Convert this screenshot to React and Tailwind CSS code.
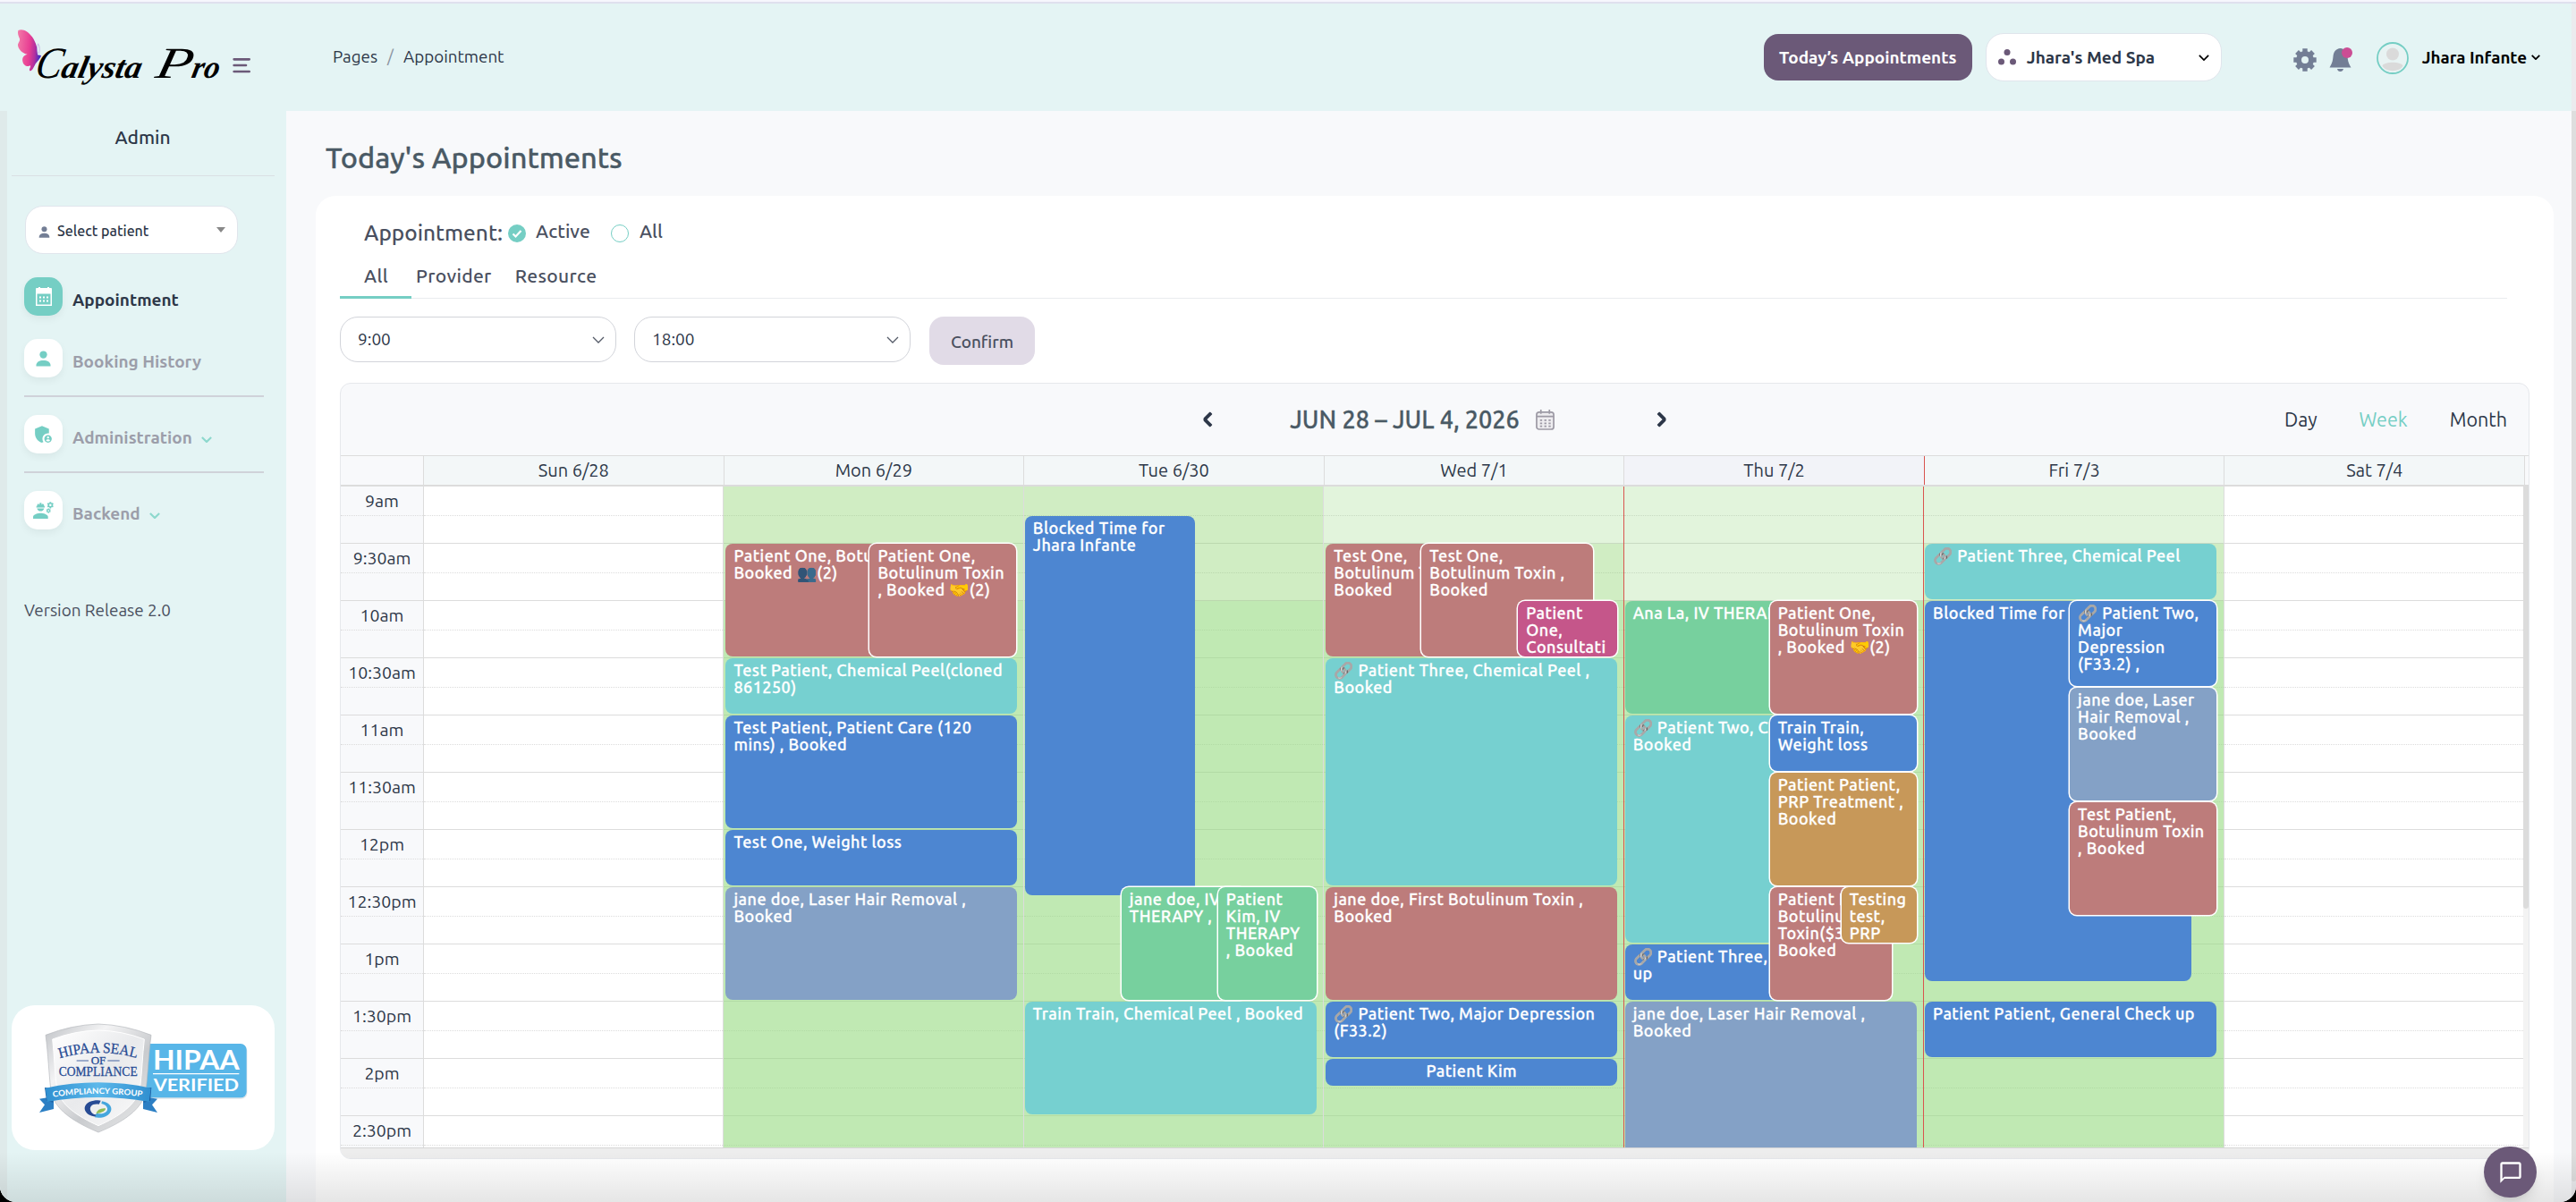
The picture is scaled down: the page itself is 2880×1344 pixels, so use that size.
import {
  MdAdminPanelSettings, MdChatBubbleOutline, MdEngineering,
} from "react-icons/md";

const RED = "bg-[#bd7c7b]";
const TEAL = "bg-[#76d0d0]";
const BLUE = "bg-[#4d86d1]";
const SLATE = "bg-[#84a1c6]";
const GREEN = "bg-[#77d09e]";
const GOLD = "bg-[#c79859]";
const PINK = "bg-[#c5568a]";

// one half-hour row of the time grid
const ROW = 64;

const SHADES = {
  soft: "bg-[#8bd373]/25",
  mid: "bg-[#8ad269]/40",
  full: "bg-[#96da80]/60",
};

const HOURS = [
  "9am", "9:30am", "10am", "10:30am", "11am", "11:30am",
  "12pm", "12:30pm", "1pm", "1:30pm", "2pm", "2:30pm",
];

const EMOJI = {
  "🔗": "grayscale",
  "👥": "brightness-75 saturate-50",
  "🤝": "",
};

// at / len are counted in half-hour rows, x / w in px inside the day column
const DAYS = [
  { name: "Sun 6/28", shades: [], events: [] },
  {
    name: "Mon 6/29",
    shades: [["mid", 0, 2], ["full", 2, 10]],
    events: [
      { at: 1, len: 2, x: 3, w: 200, bg: RED, lines: ["Patient One, Botulinum", "Booked 👥(2)"] },
      { at: 1, len: 2, x: 164, w: 164, bg: RED, inset: true, lines: ["Patient One,", "Botulinum Toxin", ", Booked 🤝(2)"] },
      { at: 3, len: 1, x: 3, w: 326, bg: TEAL, lines: ["Test Patient, Chemical Peel(cloned", "861250)"] },
      { at: 4, len: 2, x: 3, w: 326, bg: BLUE, lines: ["Test Patient, Patient Care (120", "mins) , Booked"] },
      { at: 6, len: 1, x: 3, w: 326, bg: BLUE, lines: ["Test One, Weight loss"] },
      { at: 7, len: 2, x: 3, w: 326, bg: SLATE, lines: ["jane doe, Laser Hair Removal ,", "Booked"] },
    ],
  },
  {
    name: "Tue 6/30",
    shades: [["mid", 0, 2], ["full", 2, 10]],
    events: [
      { at: 0.52, len: 6.65, x: 2, w: 190, bg: BLUE, lines: ["Blocked Time for", "Jhara Infante"] },
      { at: 7, len: 2, x: 110, w: 140, bg: GREEN, inset: true, lines: ["jane doe, IV", "THERAPY ,"] },
      { at: 7, len: 2, x: 218, w: 110, bg: GREEN, inset: true, lines: ["Patient", "Kim, IV", "THERAPY", ", Booked"] },
      { at: 9, len: 2, x: 2, w: 326, bg: TEAL, lines: ["Train Train, Chemical Peel , Booked"] },
    ],
  },
  {
    name: "Wed 7/1",
    shades: [["soft", 0, 1], ["mid", 1, 1], ["full", 2, 10]],
    events: [
      { at: 1, len: 2, x: 3, w: 120, bg: RED, lines: ["Test One,", "Botulinum T", "Booked"] },
      { at: 1, len: 2, x: 110, w: 192, bg: RED, inset: true, lines: ["Test One,", "Botulinum Toxin ,", "Booked"] },
      { at: 2, len: 1, x: 218, w: 111, bg: PINK, inset: true, lines: ["Patient", "One,", "Consultati"] },
      { at: 3, len: 4, x: 3, w: 326, bg: TEAL, lines: ["🔗 Patient Three, Chemical Peel ,", "Booked"] },
      { at: 7, len: 2, x: 3, w: 326, bg: RED, lines: ["jane doe, First Botulinum Toxin ,", "Booked"] },
      { at: 9, len: 1, x: 3, w: 326, bg: BLUE, lines: ["🔗 Patient Two, Major Depression", "(F33.2)"] },
      { at: 10, len: 0.5, x: 3, w: 326, bg: BLUE, center: true, lines: ["Patient Kim"] },
    ],
  },
  {
    name: "Thu 7/2",
    today: true,
    shades: [["soft", 0, 2], ["full", 2, 10]],
    events: [
      { at: 2, len: 2, x: 2, w: 175, bg: GREEN, lines: ["Ana La, IV THERAPY"] },
      { at: 4, len: 4, x: 2, w: 175, bg: TEAL, lines: ["🔗 Patient Two, Chem", "Booked"] },
      { at: 8, len: 1, x: 2, w: 175, bg: BLUE, lines: ["🔗 Patient Three,", "up"] },
      { at: 9, len: 3, x: 2, w: 326, bg: SLATE, lines: ["jane doe, Laser Hair Removal ,", "Booked"] },
      { at: 2, len: 2, x: 164, w: 164, bg: RED, inset: true, lines: ["Patient One,", "Botulinum Toxin", ", Booked 🤝(2)"] },
      { at: 4, len: 1, x: 164, w: 164, bg: BLUE, inset: true, lines: ["Train Train,", "Weight loss"] },
      { at: 5, len: 2, x: 164, w: 164, bg: GOLD, inset: true, lines: ["Patient Patient,", "PRP Treatment ,", "Booked"] },
      { at: 7, len: 2, x: 164, w: 136, bg: RED, inset: true, lines: ["Patient K", "Botulinum", "Toxin($3)", "Booked"] },
      { at: 7, len: 1, x: 244, w: 84, bg: GOLD, inset: true, lines: ["Testing", "test,", "PRP"] },
    ],
  },
  {
    name: "Fri 7/3",
    red: true,
    shades: [["soft", 0, 1], ["mid", 1, 1], ["full", 2, 10]],
    events: [
      { at: 1, len: 1, x: 2, w: 326, bg: TEAL, lines: ["🔗 Patient Three, Chemical Peel"] },
      { at: 2, len: 6.67, x: 2, w: 298, bg: BLUE, lines: ["Blocked Time for"] },
      { at: 2, len: 1.52, x: 164, w: 164, bg: BLUE, inset: true, lines: ["🔗 Patient Two,", "Major", "Depression", "(F33.2) ,"] },
      { at: 3.52, len: 2, x: 164, w: 164, bg: SLATE, inset: true, lines: ["jane doe, Laser", "Hair Removal ,", "Booked"] },
      { at: 5.52, len: 2, x: 164, w: 164, bg: RED, inset: true, lines: ["Test Patient,", "Botulinum Toxin", ", Booked"] },
      { at: 9, len: 1, x: 2, w: 326, bg: BLUE, lines: ["Patient Patient, General Check up"] },
    ],
  },
  { name: "Sat 7/4", shades: [], events: [] },
];

function Chevron({ className, width = 2 }) {
  return (
    <svg viewBox="0 0 14 8" className={className} fill="none" stroke="currentColor" strokeWidth={width}>
      <path d="M1 1l6 6 6-6" />
    </svg>
  );
}

function Logo() {
  return (
    <svg viewBox="0 0 840 300" className="h-[100px] w-[280px]">
      <defs>
        <linearGradient id="wing" x1="0" y1="0" x2="1" y2="0.15">
          <stop offset="0" stopColor="#f27aa8" />
          <stop offset="0.55" stopColor="#e83e93" />
          <stop offset="0.8" stopColor="#b02f9f" />
          <stop offset="1" stopColor="#4a2fc0" />
        </linearGradient>
      </defs>
      <path
        fill="url(#wing)"
        d="M31 42C45 34 66 46 78 64C92 84 97 108 96 124L108 126C104 140 94 146 88 156C82 168 78 178 70 178C66 172 74 166 72 160C60 166 48 158 46 146C44 134 48 126 62 122C44 118 32 106 30 92C30 84 38 78 36 70C32 60 28 52 31 42Z"
      />
      <path d="M97 120C94 108 94 98 98 86M101 120C104 108 104 98 99 88" fill="none" stroke="#c3b1e6" strokeWidth="2.5" />
      <g transform="translate(44 0) skewX(-12)">
        <text
          y="202"
          fontFamily="'Liberation Serif', serif"
          fontStyle="italic"
          fontWeight="700"
          fontSize="106"
        >
          <tspan x="82" fontSize="148" fontWeight="400" textLength="88" lengthAdjust="spacingAndGlyphs">C</tspan>
          <tspan x="170" textLength="268" lengthAdjust="spacingAndGlyphs">alysta</tspan>
          <tspan x="486" fontSize="148" fontWeight="400" textLength="122" lengthAdjust="spacingAndGlyphs">P</tspan>
          <tspan x="608" textLength="92" lengthAdjust="spacingAndGlyphs">ro</tspan>
        </text>
      </g>
      <path d="M755 139H806M755 159H795M755 180H806" stroke="#6b5978" strokeWidth="8" strokeLinecap="round" />
    </svg>
  );
}

function HipaaSeal() {
  return (
    <svg viewBox="0 0 810 450" className="h-[150px] w-[270px]">
      <defs>
        <linearGradient id="steel" x1="0" y1="0" x2="1" y2="1">
          <stop offset="0" stopColor="#bfc2c6" />
          <stop offset="0.3" stopColor="#f4f4f5" />
          <stop offset="0.6" stopColor="#c9cbce" />
          <stop offset="1" stopColor="#eceded" />
        </linearGradient>
        <linearGradient id="face" x1="0" y1="0" x2="1" y2="1">
          <stop offset="0" stopColor="#ffffff" />
          <stop offset="0.5" stopColor="#e9eaec" />
          <stop offset="1" stopColor="#fafafa" />
        </linearGradient>
        <linearGradient id="ribbon" x1="0" y1="0" x2="1" y2="0">
          <stop offset="0" stopColor="#2f8fd0" />
          <stop offset="0.5" stopColor="#5cb8ea" />
          <stop offset="1" stopColor="#2f8fd0" />
        </linearGradient>
        <path id="arc-top" d="M140 160Q270 122 402 160" />
        <path id="arc-ribbon" d="M118 290Q270 268 422 290" />
      </defs>
      <rect x="405" y="114" width="364" height="182" rx="20" fill="#c9d3da" opacity="0.6" />
      <rect x="403" y="111" width="364" height="181" rx="20" fill="#58b6e8" />
      <g fill="#fff" fontFamily="Lato, sans-serif" fontWeight="700">
        <text x="453" y="199" fontSize="94" textLength="290" lengthAdjust="spacingAndGlyphs">HIPAA</text>
        <text x="455" y="269" fontSize="58" textLength="286" lengthAdjust="spacingAndGlyphs">VERIFIED</text>
      </g>
      <path d="M453 212H742" stroke="#fff" strokeWidth="4" />
      <path
        fill="url(#steel)"
        stroke="#b5b8bc"
        strokeWidth="2"
        d="M93 82Q180 48 270 45Q360 48 447 82C438 150 436 210 430 262C424 330 350 375 270 408C190 375 116 330 110 262C104 210 102 150 93 82Z"
      />
      <path
        fill="url(#face)"
        stroke="#fff"
        strokeWidth="3"
        d="M116 96Q190 68 270 66Q350 68 424 96C418 150 416 210 410 258C400 315 340 355 270 386C200 355 140 315 130 258C124 210 122 150 116 96Z"
      />
      <g fill="#274b94" fontFamily="'Liberation Serif', serif" fontWeight="400" stroke="#274b94" strokeWidth="0.8">
        <text fontSize="50">
          <textPath href="#arc-top" textLength="262" lengthAdjust="spacingAndGlyphs">HIPAA SEAL</textPath>
        </text>
        <text x="245" y="180" fontSize="38" textLength="50" lengthAdjust="spacingAndGlyphs">OF</text>
        <text x="137" y="218" fontSize="42" textLength="264" lengthAdjust="spacingAndGlyphs">COMPLIANCE</text>
      </g>
      <path d="M197 168H237M301 168H341" stroke="#274b94" strokeWidth="2.5" />
      <path d="M72 296L120 288V330L72 342L90 316Z" fill="#2c7fc4" />
      <path d="M468 296L420 288V330L468 342L450 316Z" fill="#2c7fc4" />
      <path d="M90 258L118 262V308L96 302Z" fill="#1b5c9e" />
      <path d="M448 258L422 262V308L444 302Z" fill="#1b5c9e" />
      <path d="M92 260Q270 222 446 260L440 306Q270 276 98 306Z" fill="url(#ribbon)" />
      <text fill="#fff" fontSize="27" fontFamily="Lato, sans-serif" fontWeight="700">
        <textPath href="#arc-ribbon" textLength="300" lengthAdjust="spacingAndGlyphs">COMPLIANCY GROUP</textPath>
      </text>
      <path d="M262 356C222 352 212 320 240 306C256 299 272 300 278 302L272 314C250 310 238 322 244 336C248 346 256 350 264 348Z" fill="#274b94" />
      <path d="M282 304C316 310 322 336 302 350C288 360 270 361 258 358L264 344C284 350 302 342 300 328C298 318 290 314 280 312Z" fill="#45a6dd" />
      <path d="M262 346Q268 326 294 328Q296 340 262 346Z" fill="#8dbb55" />
    </svg>
  );
}

function CalendarGlyph() {
  return (
    <svg viewBox="0 0 18 21" className="h-[21px] w-[18px]">
      <path fill="#fff" fillRule="evenodd" d="M0 2Q0 1 1 1H3V0H5V1H13V0H15V1H17Q18 1 18 2V21H0ZM1.5 7.500V19.500H16.500V7.500Z" />
      <path stroke="#fff" strokeWidth="2" strokeDasharray="2 2" d="M4 11.500H14M4 15.500H14" />
    </svg>
  );
}

function PersonGlyph({ className }) {
  return (
    <svg viewBox="0 0 18 19" className={className} fill="currentColor">
      <circle cx="9" cy="4.800" r="4.400" />
      <path d="M0.500 18.500V17C1 13.500 4 11.500 9 11.500S17 13.500 17.500 17V18.500Z" />
    </svg>
  );
}

function Gear() {
  return (
    <svg viewBox="0 0 26 26" className="h-[26px] w-[26px]">
      <circle cx="13" cy="13" r="7" fill="none" stroke="#737e95" strokeWidth="6" />
      {[0, 45, 90, 135].map((a) => (
        <path key={a} d="M10.300 0.300H15.700V4.500H10.300ZM10.300 21.500H15.700V25.700H10.300Z" fill="#737e95" transform={`rotate(${a} 13 13)`} />
      ))}
    </svg>
  );
}

function NavItem({ icon, label, active, expandable }) {
  return (
    <div className="flex h-[43px] items-center">
      <div
        className={`flex h-[43px] w-[43px] items-center justify-center rounded-[15px] shadow-[0_4px_8px_rgba(0,0,0,0.05)] ${
          active ? "bg-[#75cec4]" : "bg-white text-[#75cec4]"
        }`}
      >
        {icon}
      </div>
      <span className={`ml-[11px] mt-[7px] text-[19px] font-bold ${active ? "text-[#2d3748]" : "text-[#9c9eaa]"}`}>
        {label}
      </span>
      {expandable && <Chevron className="ml-[10px] mt-[11px] h-[7px] w-[12px] text-[#8dd8cd]" width={2.5} />}
    </div>
  );
}

function Sidebar() {
  return (
    <aside className="flex h-[1220px] w-[320px] shrink-0 bg-[#e4f4f4]">
      <div className="w-[8px] bg-[#dfeaea]" />
      <div className="flex w-[312px] flex-col">
        <div className="pr-[9px] pt-[17px] text-center text-[21px] font-medium leading-[25px] text-[#2d3748]">Admin</div>
        <div className="ml-[5px] mt-[30px] h-px w-[294px] bg-[#dadfe3]" />
        <div className="ml-[20px] mt-[33px] flex h-[54px] w-[238px] items-center rounded-[20px] border border-[#e0e5ec] bg-white pl-[14px]">
          <PersonGlyph className="mt-1 h-[13px] w-[13px] text-[#737e95]" />
          <span className="ml-[8px] mt-[2px] text-[16px] font-medium text-[#2d3748]">Select patient</span>
          <span className="ml-auto mr-[13px] h-0 w-0 border-x-[5px] border-t-[6px] border-x-transparent border-t-[#888]" />
        </div>
        <nav className="ml-[19px] mt-[26px] flex w-[268px] flex-col">
          <NavItem active label="Appointment" icon={<CalendarGlyph />} />
          <div className="h-[26px]" />
          <NavItem label="Booking History" icon={<PersonGlyph className="h-[18px] w-[17px]" />} />
          <div className="my-[20px] h-[2px] bg-[#cfd2d9]" />
          <NavItem expandable label="Administration" icon={<MdAdminPanelSettings className="h-[25px] w-[25px]" />} />
          <div className="my-[20px] h-[2px] bg-[#cfd2d9]" />
          <NavItem expandable label="Backend" icon={<MdEngineering className="h-[25px] w-[25px]" />} />
        </nav>
        <div className="ml-[19px] mt-[78px] text-[18.9px] leading-6 text-[#4a5060]">Version Release 2.0</div>
        <div className="mb-[58px] ml-[5px] mt-auto h-[162px] w-[294px] rounded-[26px] bg-white pl-[7px] pt-[6px]">
          <HipaaSeal />
        </div>
      </div>
    </aside>
  );
}

function TopBar() {
  return (
    <header className="flex h-[120px] bg-[#e4f4f4]">
      <div className="w-[372px] shrink-0 pl-[10px] pt-[16px]">
        <Logo />
      </div>
      <div className="mt-[47px] flex h-6 items-center text-[18.8px] leading-6 text-[#2d3748]">
        <span>Pages</span>
        <span className="mx-[11px] text-[#8a93a0]">/</span>
        <span>Appointment</span>
      </div>
      <div className="ml-auto mr-[35px] mt-[33px] flex h-[54px] items-center text-[19px] font-bold">
        <div className="flex h-[52px] w-[233px] items-center justify-center whitespace-nowrap rounded-[16px] bg-[#6b5978] text-white">
          Today’s Appointments
        </div>
        <div className="ml-[15px] flex h-[54px] w-[264px] items-center rounded-[20px] border border-[#e0e5ec] bg-white pl-[13px]">
          <svg viewBox="0 0 20 18" className="h-[18px] w-[20px]" fill="#6b5978">
            <circle cx="10" cy="3.500" r="3.500" />
            <circle cx="3.500" cy="14" r="3.500" />
            <circle cx="16.500" cy="14" r="3.500" />
          </svg>
          <span className="ml-[12px] text-[#2d3748]">Jhara's Med Spa</span>
          <Chevron className="ml-auto mr-[13px] h-[7px] w-[12px]" />
        </div>
        <div className="ml-[80px] mt-[5px]">
          <Gear />
        </div>
        <svg viewBox="0 0 26 28" className="ml-[14px] mt-[5px] h-[28px] w-[26px]">
          <path fill="#737e95" d="M12.500 1C7.500 1.500 5 5 4.500 10C4 16 3 18 0.500 22.500H24.500C22 18 21 16 20.500 10C20 5 17.500 1.500 12.500 1ZM9 24H16C15.500 26 14.500 27 12.500 27S9.500 26 9 24Z" />
          <circle cx="20" cy="6" r="6" fill="#cb4d94" />
        </svg>
        <svg viewBox="0 0 36 36" className="ml-[27px] mt-[2px] h-[36px] w-[36px]">
          <circle cx="18" cy="18" r="17" fill="#e8f3f3" stroke="#75cec4" strokeWidth="1.800" />
          <circle cx="18" cy="13.500" r="7" fill="#dadada" />
          <path d="M6.500 26.500C9 21.500 27 21.500 29.500 26.500C26 34 10 34 6.500 26.500Z" fill="#dadada" />
        </svg>
        <span className="ml-[15px] text-[18.8px]">Jhara Infante</span>
        <Chevron className="ml-[5px] h-[6px] w-[10px]" width={2.5} />
      </div>
    </header>
  );
}

function TimeSelect({ value }) {
  return (
    <div className="flex h-[51px] w-[309px] items-center justify-between rounded-[20px] border border-[#d2d4da] bg-white pl-[19px] pr-[12px] text-[19px] text-[#2d3748]">
      <span>{value}</span>
      <Chevron className="h-[8px] w-[14px] text-[#555b68]" width={1.3} />
    </div>
  );
}

function Line({ text }) {
  return (
    <div className="h-[19px]">
      {text.split(/(🔗|👥|🤝)/u).map((part, i) =>
        part in EMOJI ? (
          <span key={i} className={`inline-block h-[19px] ${EMOJI[part]}`}>{part}</span>
        ) : (
          part
        )
      )}
    </div>
  );
}

function Event({ event }) {
  const { at, len, x, w, bg, inset, center, lines } = event;
  return (
    <div
      className={`absolute -ml-px overflow-hidden whitespace-pre rounded-[8px] pt-[4px] text-[18px] font-medium leading-[19px] tracking-[0.48px] text-white [-webkit-text-stroke:0.3px_white] ${bg} ${
        inset ? "ring-[1.5px] ring-white" : ""
      } ${center ? "text-center" : "pl-[9px]"}`}
      style={{ top: at * ROW, height: len * ROW - 2, left: x, width: w }}
    >
      {lines.map((line) => (
        <Line key={line} text={line} />
      ))}
    </div>
  );
}

function DayColumn({ day }) {
  const edge = day.today || day.red ? "border-[#d9544f]" : "border-[#dcdcdc]";
  return (
    <div className={`relative h-[768px] flex-1 border-l ${edge}`}>
      {HOURS.map((h) => (
        <div key={h} className="h-[64px] border-b border-[#dcdcdc]">
          <div className="h-[33px] border-b border-dotted border-[#dcdcdc]" />
        </div>
      ))}
      {day.shades.map(([shade, from, rows]) => (
        <div
          key={from}
          className={`absolute inset-x-0 ${SHADES[shade]}`}
          style={{ top: from * ROW, height: rows * ROW }}
        />
      ))}
      {day.events.map((event, i) => (
        <Event key={i} event={event} />
      ))}
    </div>
  );
}

function Calendar() {
  return (
    <section className="mt-[20px] w-[2448px] overflow-hidden rounded-[12px] border border-[#e6e8ec] bg-[#f8f9fb]">
      <div className="grid h-[80px] grid-cols-3 items-center text-[21.5px] text-[#2d3748]">
        <div />
        <div className="flex items-center justify-center gap-[83px]">
          <Chevron className="h-[10px] w-[17px] rotate-90" width={3.2} />
          <div className="flex items-center whitespace-nowrap text-[27px] font-medium text-[#4a5a65] [-webkit-text-stroke:0.3px]">
            JUN 28 – JUL 4, 2026
            <svg viewBox="0 0 22 24" className="ml-[18px] h-[23px] w-[21px]" fill="none" stroke="#9d9aa5" strokeWidth="1.800">
              <rect x="1" y="3" width="20" height="20" rx="3" fill="#eeedf0" />
              <path d="M1 8H21M6 0V5M16 0V5" />
              <path strokeDasharray="2.500 2.500" d="M5 12.500H18M5 16H18M5 19.500H18" />
            </svg>
          </div>
          <Chevron className="ml-[28px] h-[10px] w-[17px] -rotate-90" width={3.2} />
        </div>
        <div className="flex justify-end gap-[47px] pr-[24px]">
          <span>Day</span>
          <span className="text-[#75cec4]">Week</span>
          <span>Month</span>
        </div>
      </div>
      <div className="flex h-[35px] border-b-2 border-t border-[#dcdcdc]">
        <div className="w-[92px] shrink-0" />
        <div className="flex w-[2349px]">
          {DAYS.map((day) => (
            <div
              key={day.name}
              className={`flex flex-1 items-center justify-center border-l text-[20px] text-[#2d3748] ${
                day.red ? "border-[#d9544f]" : "border-[#dcdcdc]"
              } ${day.today ? "bg-[#f2f3f8]" : "bg-[#f3f7f8]"}`}
            >
              {day.name}
            </div>
          ))}
        </div>
        <div className="flex-1 border-l border-[#dcdcdc]" />
      </div>
      <div className="flex h-[740px] overflow-hidden border-b border-[#d6d6d6] bg-white">
        <div className="w-[92px] shrink-0 bg-[#f8f9fb]">
          {HOURS.map((h) => (
            <div key={h} className="h-[64px] border-b border-[#dcdcdc]">
              <div className="flex h-[33px] items-center justify-center border-b border-dotted border-[#dcdcdc] pt-[2px] text-[19.5px] text-[#2d3748]">
                {h}
              </div>
            </div>
          ))}
        </div>
        <div className="flex w-[2348px]">
          {DAYS.map((day) => (
            <DayColumn key={day.name} day={day} />
          ))}
        </div>
        <div className="flex-1 bg-[#f3f3f3]">
          <div className="h-[472px] rounded-b bg-[#dcdcdc]" />
        </div>
      </div>
      <div className="h-[11px] bg-[#ededed]" />
    </section>
  );
}

function Content() {
  return (
    <main className="flex-1 bg-[#f8f9fb] pl-[33px]">
      <h1 className="h-[95px] pl-[11px] pt-[32px] text-[32.500px] font-medium leading-[40px] text-[#4a5a65] [-webkit-text-stroke:0.3px]">Today's Appointments</h1>
      <div className="h-[1125px] w-[2502px] rounded-t-[22px] bg-white pl-[27px]">
        <div className="flex h-[70px] items-center pl-[27px] pt-[12px] text-[21px] font-medium text-[#4a5060]">
          <span className="text-[24.4px]">Appointment:</span>
          <svg viewBox="0 0 20 20" className="ml-[6px] mt-[2px] h-[20px] w-[20px]">
            <circle cx="10" cy="10" r="10" fill="#75cec4" />
            <path d="M5.500 10.500l3 3 6-6.500" fill="none" stroke="#fff" strokeWidth="2.200" />
          </svg>
          <span className="-mt-[3px] ml-[11px] tracking-[0.1px]">Active</span>
          <span className="ml-[23px] mt-[2px] h-[20px] w-[20px] rounded-full border-[1.5px] border-[#75cec4]" />
          <span className="-mt-[3px] ml-[12px]">All</span>
        </div>
        <div className="flex h-[45px] w-[2423px] border-b border-[#e9ecef] text-[21px] font-medium leading-[24px] tracking-[0.35px] text-[#4a5060]">
          <div className="h-[45px] w-[80px] border-b-[3px] border-[#75cec4] pl-[27px] pt-[7px]">All</div>
          <div className="pl-[5px] pt-[7px]">Provider</div>
          <div className="pl-[26px] pt-[7px]">Resource</div>
        </div>
        <div className="mt-[20px] flex gap-[20px]">
          <TimeSelect value="9:00" />
          <TimeSelect value="18:00" />
          <div className="ml-px flex h-[54px] w-[118px] items-center justify-center rounded-[16px] bg-[#e1dbe7] pt-[3px] text-[19px] font-medium text-[#4a5060]">
            Confirm
          </div>
        </div>
        <Calendar />
      </div>
    </main>
  );
}

export default function App() {
  return (
    <div className="relative flex h-[1344px] w-[2880px] overflow-hidden bg-black font-[Ubuntu,'Noto_Sans',sans-serif]">
      <div className="flex w-[2880px] flex-col overflow-hidden rounded-b-[18px] bg-white">
        <div className="h-[4px] shrink-0 border-b-2 border-[#dfe0ee] bg-[#f6f6fd]" />
        <div className="flex">
          <div className="w-[2875px]">
            <TopBar />
            <div className="flex">
              <Sidebar />
              <Content />
            </div>
          </div>
          <div className="w-[5px] bg-[#ebebee]">
            <div className="mt-[120px] h-[1197px] rounded-b bg-[#dedede]" />
          </div>
        </div>
      </div>
      <div className="pointer-events-none absolute inset-x-0 bottom-0 h-[56px] rounded-b-[18px] bg-gradient-to-b from-black/0 to-black/10" />
      <button className="absolute bottom-[5px] right-[44px] flex h-[57px] w-[59px] items-center justify-center rounded-full bg-[#6b5978] text-white shadow-lg">
        <MdChatBubbleOutline className="h-[28px] w-[28px]" />
      </button>
    </div>
  );
}
